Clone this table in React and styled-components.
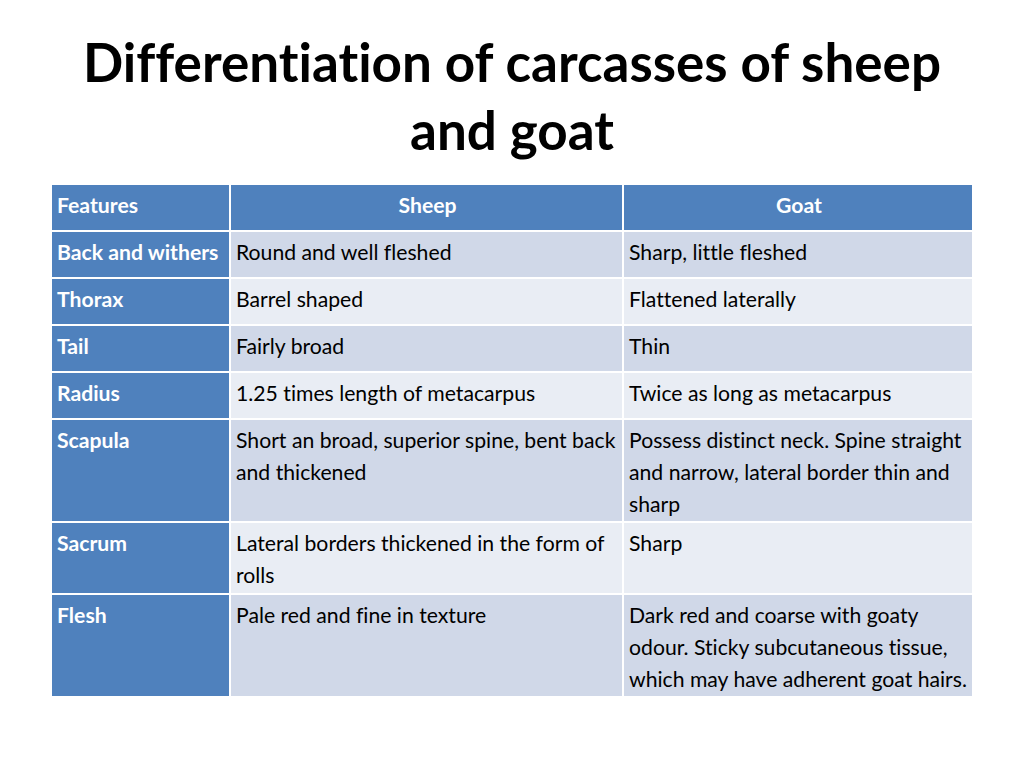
import React from 'react';
import styled, { createGlobalStyle } from 'styled-components';

const GlobalStyle = createGlobalStyle`
  html, body {
    margin: 0;
    padding: 0;
    background: #ffffff;
  }
  body {
    font-family: Lato, "Open Sans", "Liberation Sans", sans-serif;
    font-variant-ligatures: none;
    color: #000;
  }
`;

const Slide = styled.div`
  width: 1024px;
  height: 768px;
  box-sizing: border-box;
  padding: 28px 52px 0;
  display: flex;
  flex-direction: column;
  align-items: center;
`;

const Title = styled.h1`
  margin: 0;
  width: 100%;
  text-align: center;
  font-size: 53px;
  line-height: 68px;
  font-weight: 700;
  white-space: nowrap;
`;

const Table = styled.div`
  margin-top: 21px;
  display: grid;
  grid-template-columns: 177px 391px 348px;
  grid-auto-rows: minmax(45px, auto);
  gap: 2px;
  background: #ffffff;
`;

const Cell = styled.div`
  box-sizing: border-box;
  padding: 5px 3px 1px 5px;
  font-size: 21.2px;
  line-height: 31.8px;
  background: ${(p) => (p.$blue ? '#4f81bd' : p.$even ? '#e9edf4' : '#d0d8e8')};
  color: ${(p) => (p.$blue ? '#ffffff' : '#000000')};
  font-weight: ${(p) => (p.$blue ? 700 : 400)};
  text-align: ${(p) => (p.$center ? 'center' : 'left')};
`;

const rows = [
  ['Back and withers', 'Round and well fleshed', 'Sharp, little fleshed'],
  ['Thorax', 'Barrel shaped', 'Flattened laterally'],
  ['Tail', 'Fairly broad', 'Thin'],
  ['Radius', '1.25 times length of metacarpus', 'Twice as long as metacarpus'],
  ['Scapula', 'Short an broad, superior spine, bent back and thickened', 'Possess distinct neck. Spine straight and narrow, lateral border thin and sharp'],
  ['Sacrum', 'Lateral borders thickened in the form of rolls', 'Sharp'],
  ['Flesh', 'Pale red and fine in texture', 'Dark red and coarse with goaty odour. Sticky subcutaneous tissue, which may have adherent goat hairs.'],
];

export default function App() {
  return (
    <>
      <GlobalStyle />
      <Slide>
        <Title>
          Differentiation of carcasses of sheep
          <br />
          and goat
        </Title>
        <Table>
          <Cell $blue>Features</Cell>
          <Cell $blue $center>Sheep</Cell>
          <Cell $blue $center>Goat</Cell>
          {rows.map((r, i) => (
            <React.Fragment key={r[0]}>
              <Cell $blue>{r[0]}</Cell>
              <Cell $even={i % 2 === 1}>{r[1]}</Cell>
              <Cell $even={i % 2 === 1}>{r[2]}</Cell>
            </React.Fragment>
          ))}
        </Table>
      </Slide>
    </>
  );
}
